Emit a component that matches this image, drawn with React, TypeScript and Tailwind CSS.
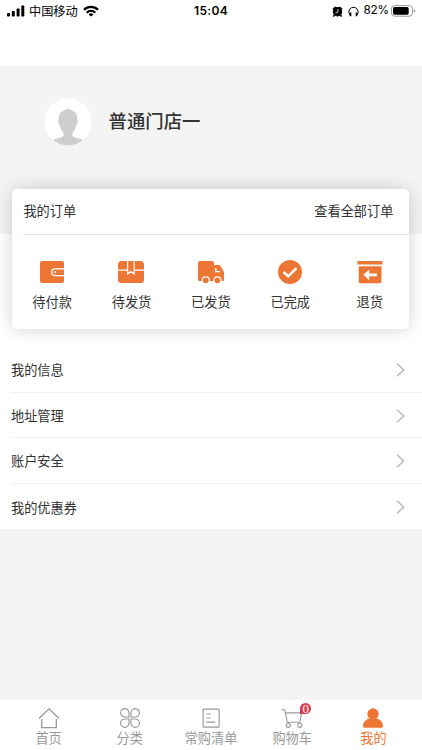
import type { ReactNode } from 'react'

const ORANGE = '#ec7735'

const ORDERS: { label: string; icon: ReactNode }[] = [
  { label: '待付款', icon: <WalletIcon /> },
  { label: '待发货', icon: <BoxIcon /> },
  { label: '已发货', icon: <TruckIcon /> },
  { label: '已完成', icon: <DoneIcon /> },
  { label: '退货', icon: <ReturnIcon /> },
]

const MENU = ['我的信息', '地址管理', '账户安全', '我的优惠券']

const TABS: { label: string; icon: ReactNode; active?: boolean; badge?: string }[] = [
  { label: '首页', icon: <HomeIcon /> },
  { label: '分类', icon: <CategoryIcon /> },
  { label: '常购清单', icon: <ListIcon /> },
  { label: '购物车', icon: <CartIcon />, badge: '0' },
  { label: '我的', icon: <UserIcon />, active: true },
]

function WalletIcon() {
  return (
    <svg width="28" height="28" viewBox="0 0 28 28" fill={ORANGE}>
      <rect x="2" y="3" width="24" height="22" rx="2" />
      <path d="M26.5 10.8H17a3.4 3.4 0 0 0 0 6.8h9.5" fill="none" stroke="#fff" strokeWidth="1.2" />
      <circle cx="17.2" cy="14.2" r="1.1" fill="#fff" />
    </svg>
  )
}

function BoxIcon() {
  return (
    <svg width="28" height="28" viewBox="0 0 28 28" fill={ORANGE}>
      <path d="M4.4 3H10v8.4H1V7.2C1 4.6 2.2 3 4.4 3ZM17.8 3h5.8C25.8 3 27 4.6 27 7.2v4.2h-9.2Z" />
      <path d="M11.2 3h5.4v11.6l-2.7-1.8-2.7 1.8Z" />
      <path d="M1 12.8h9v4.4l3.9-2.7 3.9 2.7v-4.4H27V22a3 3 0 0 1-3 3H4a3 3 0 0 1-3-3Z" />
    </svg>
  )
}

function TruckIcon() {
  return (
    <svg width="28" height="28" viewBox="0 0 28 28" fill={ORANGE}>
      <path d="M3 3h12a2 2 0 0 1 2 2v2h4.5c1 0 1.7.5 2.2 1.3l2.7 4.8c.4.6.6 1.1.6 1.8V22a1 1 0 0 1-1 1H2.6A1.6 1.6 0 0 1 1 21.4V5a2 2 0 0 1 2-2Z" />
      <path d="M18.8 10v3.6h4.4" fill="none" stroke="#fff" strokeWidth="1.4" />
      <circle cx="8.8" cy="22.3" r="3.5" stroke="#fff" strokeWidth="1.2" />
      <circle cx="20.4" cy="22.3" r="3.5" stroke="#fff" strokeWidth="1.2" />
    </svg>
  )
}

function DoneIcon() {
  return (
    <svg width="28" height="28" viewBox="0 0 28 28" fill={ORANGE}>
      <circle cx="14" cy="14" r="12" />
      <path d="m7.5 14 4.7 4.3 8.3-8.2" fill="none" stroke="#fff" strokeWidth="2.6" />
    </svg>
  )
}

function ReturnIcon() {
  return (
    <svg width="28" height="28" viewBox="0 0 28 28" fill={ORANGE}>
      <path d="M1.5 3h25v3.6h-25ZM2.7 8.2h22.8v15.6a1.4 1.4 0 0 1-1.4 1.4h-20a1.4 1.4 0 0 1-1.4-1.4Z" />
      <path d="m7.3 16.8 5.9-5.4v4h7.8v2.8h-7.8v4Z" fill="#fff" />
    </svg>
  )
}

function HomeIcon() {
  return (
    <svg width="24" height="24" viewBox="0 0 24 24" fill="none" stroke="#96999c" strokeWidth="1.3">
      <path d="M2 12.5 12 2.8l10 9.7M4.7 13v8.6h14.6V13" />
    </svg>
  )
}

function CategoryIcon() {
  return (
    <svg width="24" height="24" viewBox="0 0 24 24" fill="none" stroke="#96999c" strokeWidth="1.2">
      <path d="M11 11H6.8A4.2 4.2 0 1 1 11 6.8ZM13 11h4.2A4.2 4.2 0 1 0 13 6.8ZM11 13H6.8a4.2 4.2 0 1 0 4.2 4.2ZM13 13h4.2a4.2 4.2 0 1 1-4.2 4.2Z" />
    </svg>
  )
}

function ListIcon() {
  return (
    <svg width="24" height="24" viewBox="0 0 24 24" fill="none" stroke="#96999c" strokeWidth="1.2">
      <rect x="4.1" y="3.1" width="16" height="18" rx="0.5" />
      <path d="M7.3 8h5M7.3 12h4.2M7.3 16.1h8.8" />
    </svg>
  )
}

function CartIcon() {
  return (
    <svg width="24" height="24" viewBox="0 0 24 24" fill="none" stroke="#96999c" strokeWidth="1.1">
      <path d="M1.5 3.6h2c.8 0 1.2.3 1.4 1.1l2.4 11.5h12.5M5.5 6.9h16.2l-1.9 9.3" />
      <circle cx="8.3" cy="19.3" r="2.1" />
      <circle cx="19.8" cy="19.3" r="2.1" />
    </svg>
  )
}

function UserIcon() {
  return (
    <svg width="24" height="24" viewBox="0 0 24 24" fill={ORANGE}>
      <circle cx="12" cy="8" r="5.7" />
      <path d="M8 12.4h8c3.6 1.2 6 3.9 6 7.3v.5c0 .9-.6 1.5-1.5 1.5h-17c-.9 0-1.5-.6-1.5-1.5v-.5c0-3.4 2.4-6.1 6-7.3Z" />
    </svg>
  )
}

function StatusBar() {
  return (
    <div className="grid h-[22px] grid-cols-3 items-center text-black">
      <div className="flex items-center pl-[7px]">
        <svg width="18" height="12" viewBox="0 0 18 12">
          <rect x="0" y="8" width="3" height="3.5" rx="0.8" />
          <rect x="4.8" y="6" width="3" height="5.5" rx="0.8" />
          <rect x="9.6" y="3.5" width="3" height="8" rx="0.8" />
          <rect x="14.3" y="0.5" width="3" height="11" rx="0.8" />
        </svg>
        <span className="ml-[4px] text-[12.2px] leading-none">中国移动</span>
        <svg className="ml-[5px]" width="16" height="12" viewBox="0 0 16 12" fill="none" stroke="#000" strokeWidth="2.3">
          <path d="M1 4.7a10 10 0 0 1 14 0M3.7 7.7a6 6 0 0 1 8.6 0" />
          <path d="M8 11.6 5.6 9.4a3.3 3.3 0 0 1 4.8 0Z" fill="#000" stroke="none" />
        </svg>
      </div>
      <span className="text-center font-['Inter','Noto_Sans_CJK_SC',sans-serif] text-[12px] leading-none font-semibold tracking-[0.3px]">15:04</span>
      <div className="flex items-center justify-end pr-[6px]">
        <svg width="11" height="11" viewBox="0 0 11 11">
          <path d="M.4 3 3 .4l1.2 1L1.4 4ZM10.6 3 8 .4l-1.2 1L9.6 4Z" />
          <circle cx="5.5" cy="5.8" r="4.7" />
          <path d="m2.4 9-1 1.6M8.6 9l1 1.6" stroke="#000" strokeWidth="1.5" />
          <path d="M5.9 3.2v2.9L3.5 7" stroke="#fff" strokeWidth="0.8" fill="none" />
        </svg>
        <svg className="ml-[5px]" width="11" height="11" viewBox="0 0 11 11" fill="none" stroke="#000">
          <path d="M2.3 9.2A4.6 4.6 0 1 1 8.7 9.2" strokeWidth="1" />
          <path d="M2.5 6.5v3.8M8.5 6.5v3.8" strokeWidth="1.7" />
        </svg>
        <span className="ml-[5px] font-['Inter',sans-serif] text-[11.8px] leading-none tracking-[-0.2px]">82%</span>
        <svg className="ml-[2px]" width="25" height="12" viewBox="0 0 25 12">
          <rect x="0.5" y="0.6" width="21" height="10.6" rx="3" fill="none" stroke="#999" />
          <rect x="2" y="2.1" width="15.7" height="7.6" rx="1.6" />
          <path d="M23 4.2c1.6.5 1.6 2.9 0 3.4Z" fill="#888" />
        </svg>
      </div>
    </div>
  )
}

function Avatar() {
  return (
    <svg width="48" height="48" viewBox="0 0 48 48">
      <defs>
        <clipPath id="avatar">
          <circle cx="24" cy="24" r="23.5" />
        </clipPath>
      </defs>
      <g clipPath="url(#avatar)">
        <rect width="48" height="48" fill="#fff" />
        <path
          d="M24 10.3c1 1.1 2.5 1.5 4.4 2.3 3.5 1.5 5 4.7 4.7 8.9 1.3.3.6 4.3-1 6.2-.7 3.2-2 5.6-3.7 7v3c1.4 2.2 8.5 2.5 12 5.3L36 50H12l-4.4-7c3.5-2.8 10.6-3.1 12-5.3v-3c-1.7-1.4-3-3.8-3.7-7-1.6-1.9-2.3-5.9-1-6.2-.3-4.2 1.2-7.4 4.7-8.9 1.9-.8 3.4-1.2 4.4-2.3Z"
          fill="#cecece"
        />
      </g>
    </svg>
  )
}

export default function App() {
  return (
    <div className="flex h-[750px] w-[422px] flex-col overflow-hidden bg-[#f4f4f4] font-['Noto_Sans_CJK_SC',sans-serif] text-[13.2px] text-[#333]">
      <header className="h-[66px] bg-white">
        <StatusBar />
      </header>

      <section className="flex h-[168px] items-start pt-[32px] pl-[43.5px]">
        <Avatar />
        <h1 className="ml-[17px] pt-[8px] text-[18.4px] leading-[28px] font-medium">普通门店一</h1>
      </section>

      <main className="h-[295px] bg-white">
        <section className="relative -mt-[45px] ml-[12.4px] h-[140px] w-[397px] rounded-[5px] bg-white shadow-[0_0_18px_rgba(0,0,0,0.18)]">
          <div className="ml-[11px] flex h-[46px] items-center justify-between border-b border-[#dedede] pr-[16px] pb-[2px]">
            <h2>我的订单</h2>
            <a>查看全部订单</a>
          </div>
          <div className="grid grid-cols-5 pt-[23px]">
            {ORDERS.map(o => (
              <div key={o.label} className="flex flex-col items-center">
                {o.icon}
                <span className="mt-[6px] leading-[20px]">{o.label}</span>
              </div>
            ))}
          </div>
        </section>

        <ul className="mt-[18px] pl-[11px]">
          {MENU.map(label => (
            <li key={label} className="flex h-[45.7px] items-center justify-between border-b border-[#f0f0f0] pt-px pr-[17px] last:border-0">
              {label}
              <svg width="9" height="14" viewBox="0 0 9 14" fill="none" stroke="#b8b8b8" strokeWidth="1.5">
                <path d="m1 .7 6.7 6.3L1 13.3" />
              </svg>
            </li>
          ))}
        </ul>
      </main>

      <nav className="mt-auto grid h-[50px] grid-cols-5 bg-white px-[8px] pt-[6px] text-[#999]">
        {TABS.map(t => (
          <div key={t.label} className={t.active ? 'flex flex-col items-center text-[#ec7735]' : 'flex flex-col items-center'}>
            <div className="relative">
              {t.icon}
              {t.badge && (
                <span className="absolute -top-[3px] left-[20px] flex h-[11px] w-[11px] items-center justify-center rounded-full rounded-bl-none bg-[#d8394f] font-['Liberation_Serif',serif] text-[13px] leading-none text-white">
                  {t.badge}
                </span>
              )}
            </div>
            <span className="-mt-[2px] leading-[20px] whitespace-nowrap">{t.label}</span>
          </div>
        ))}
      </nav>
    </div>
  )
}
